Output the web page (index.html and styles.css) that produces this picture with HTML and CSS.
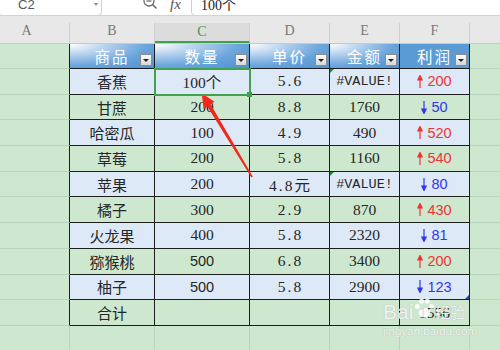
FILE: index.html
```html
<!DOCTYPE html>
<html>

<head>
	<title>水果销售表</title>
	<link rel="stylesheet" href="styles.css">
</head>

<body>
	<div class="toolbar">
		<div class="toolbar-inner">
			<div class="namebox"><span>C2</span><span class="caret"></span></div>
			<svg class="zoom-icon" viewBox="0 0 16 16">
				<circle cx="7" cy="5" r="5" fill="none" stroke="#6b6b6b" stroke-width="1.3" />
				<line x1="4.5" y1="5" x2="9.5" y2="5" stroke="#6b6b6b" stroke-width="1.3" />
				<line x1="10.6" y1="8.6" x2="14.5" y2="12.5" stroke="#6b6b6b" stroke-width="1.5" />
			</svg>
			<span class="fx">fx</span>
			<div class="formula">100个</div>
		</div>
	</div>

	<div class="colheads">
		<div class="ch a">A</div>
		<div class="ch">B</div>
		<div class="ch sel">C</div>
		<div class="ch">D</div>
		<div class="ch">E</div>
		<div class="ch">F</div>
		<div class="ch g"></div>
	</div>

	<div class="sheet">
		<div class="row head">
			<div class="cell edge"></div>
			<div class="cell t th">商品<span class="filter"></span></div>
			<div class="cell t th">数量<span class="filter"></span></div>
			<div class="cell t th">单价<span class="filter"></span></div>
			<div class="cell t th">金额<span class="filter"></span></div>
			<div class="cell t th flat">利润<span class="filter"></span></div>
			<div class="cell g"></div>
		</div>
		<div class="row blue">
			<div class="cell edge"></div>
			<div class="cell t">香蕉</div>
			<div class="cell t num picked">100个</div>
			<div class="cell t num d">5.6</div>
			<div class="cell t mono err">#VALUE!</div>
			<div class="cell t up"><svg class="arr" viewBox="0 0 6 13"><path d="M3 13V2" /><polygon points="0.8,5 3,0.5 5.2,5" /></svg>200</div>
			<div class="cell g"></div>
		</div>
		<div class="row">
			<div class="cell edge"></div>
			<div class="cell t">甘蔗</div>
			<div class="cell t num">200</div>
			<div class="cell t num d">8.8</div>
			<div class="cell t num">1760</div>
			<div class="cell t down"><svg class="arr" viewBox="0 0 6 13"><path d="M3 0V11" /><polygon points="0.8,8 3,12.5 5.2,8" /></svg>50</div>
			<div class="cell g"></div>
		</div>
		<div class="row blue">
			<div class="cell edge"></div>
			<div class="cell t">哈密瓜</div>
			<div class="cell t num">100</div>
			<div class="cell t num d">4.9</div>
			<div class="cell t num">490</div>
			<div class="cell t up"><svg class="arr" viewBox="0 0 6 13"><path d="M3 13V2" /><polygon points="0.8,5 3,0.5 5.2,5" /></svg>520</div>
			<div class="cell g"></div>
		</div>
		<div class="row">
			<div class="cell edge"></div>
			<div class="cell t">草莓</div>
			<div class="cell t num">200</div>
			<div class="cell t num d">5.8</div>
			<div class="cell t num">1160</div>
			<div class="cell t up"><svg class="arr" viewBox="0 0 6 13"><path d="M3 13V2" /><polygon points="0.8,5 3,0.5 5.2,5" /></svg>540</div>
			<div class="cell g"></div>
		</div>
		<div class="row blue">
			<div class="cell edge"></div>
			<div class="cell t">苹果</div>
			<div class="cell t num">200</div>
			<div class="cell t num d">4.8元</div>
			<div class="cell t mono err">#VALUE!</div>
			<div class="cell t down"><svg class="arr" viewBox="0 0 6 13"><path d="M3 0V11" /><polygon points="0.8,8 3,12.5 5.2,8" /></svg>80</div>
			<div class="cell g"></div>
		</div>
		<div class="row">
			<div class="cell edge"></div>
			<div class="cell t">橘子</div>
			<div class="cell t num">300</div>
			<div class="cell t num d">2.9</div>
			<div class="cell t num">870</div>
			<div class="cell t up"><svg class="arr" viewBox="0 0 6 13"><path d="M3 13V2" /><polygon points="0.8,5 3,0.5 5.2,5" /></svg>430</div>
			<div class="cell g"></div>
		</div>
		<div class="row blue">
			<div class="cell edge"></div>
			<div class="cell t">火龙果</div>
			<div class="cell t num">400</div>
			<div class="cell t num d">5.8</div>
			<div class="cell t num">2320</div>
			<div class="cell t down"><svg class="arr" viewBox="0 0 6 13"><path d="M3 0V11" /><polygon points="0.8,8 3,12.5 5.2,8" /></svg>81</div>
			<div class="cell g"></div>
		</div>
		<div class="row">
			<div class="cell edge"></div>
			<div class="cell t">猕猴桃</div>
			<div class="cell t sans">500</div>
			<div class="cell t num d">6.8</div>
			<div class="cell t num">3400</div>
			<div class="cell t up"><svg class="arr" viewBox="0 0 6 13"><path d="M3 13V2" /><polygon points="0.8,5 3,0.5 5.2,5" /></svg>200</div>
			<div class="cell g"></div>
		</div>
		<div class="row blue">
			<div class="cell edge"></div>
			<div class="cell t">柚子</div>
			<div class="cell t sans">500</div>
			<div class="cell t num d">5.8</div>
			<div class="cell t num">2900</div>
			<div class="cell t down corner"><svg class="arr" viewBox="0 0 6 13"><path d="M3 0V11" /><polygon points="0.8,8 3,12.5 5.2,8" /></svg>123</div>
			<div class="cell g"></div>
		</div>
		<div class="row">
			<div class="cell edge"></div>
			<div class="cell t">合计</div>
			<div class="cell t"></div>
			<div class="cell t"></div>
			<div class="cell t"></div>
			<div class="cell t num">1556</div>
			<div class="cell g"></div>
		</div>
		<div class="row last">
			<div class="cell"></div>
			<div class="cell"></div>
			<div class="cell"></div>
			<div class="cell"></div>
			<div class="cell"></div>
			<div class="cell"></div>
			<div class="cell g"></div>
		</div>
	</div>

	<!-- red pointer drawn over the sheet -->
	<svg class="pointer" viewBox="0 0 500 350">
		<polygon points="201.7,93.3 214.5,101.8 210.6,104.3 252.8,176.4 251.4,177.6 207.2,106.3 203.6,108.8" fill="#f2281c" />
	</svg>

	<div class="watermark">
		<div class="wm-top">
			<span class="wm-bai">Bai</span>
			<svg class="paw" viewBox="0 0 22 22">
				<ellipse cx="11" cy="16" rx="6" ry="5" />
				<circle cx="3.5" cy="9.5" r="2.6" />
				<circle cx="8" cy="4" r="2.6" />
				<circle cx="14" cy="4" r="2.6" />
				<circle cx="18.5" cy="9.5" r="2.6" />
			</svg>
			<span class="wm-jy">经验</span>
		</div>
		<div class="wm-url">jingyan.baidu.com</div>
	</div>
</body>

</html>
```

FILE: styles.css
```css
:root {
	--cols: 70px 85px 95px 80px 70px 70px 30px;
	--green: #cde8cf;
	--blue: #dde9f6;
	--grid: #b9d4bc;
	--line: #1e1e1e;
	--head: #5b9bd5;
	--pick: #3fa34d;
}

body {
	margin: 0;
	width: 500px;
	height: 350px;
	overflow: hidden;
	position: relative;
	background-color: var(--green);
	font-family: "Noto Sans CJK SC", sans-serif;
	color: #262626;
}

/* formula bar */
.toolbar {
	height: 15px;
	background-color: #fff;
	border-bottom: 1px solid #d3d3d3;
	overflow: hidden;
}

.toolbar-inner {
	display: flex;
	align-items: center;
	height: 24px;
	margin-top: -8px;
}

.namebox {
	box-sizing: border-box;
	width: 104px;
	height: 24px;
	margin-left: -2px;
	padding-left: 19px;
	display: flex;
	align-items: center;
	border: 1px solid #d0d0d0;
	border-radius: 4px;
	font: 13px "Liberation Sans", sans-serif;
	color: #555;
}

.caret {
	margin-left: auto;
	margin-right: 3px;
	width: 0;
	height: 0;
	border-left: 2.5px solid transparent;
	border-right: 2.5px solid transparent;
	border-top: 3px solid #888;
}

.zoom-icon {
	margin-left: 40px;
	width: 16px;
	height: 16px;
}

.fx {
	margin-left: 12px;
	width: 14px;
	font: italic 15px "Liberation Serif", serif;
	color: #555;
}

.formula {
	box-sizing: border-box;
	flex: 1;
	height: 24px;
	margin-left: 7px;
	margin-right: -6px;
	padding-left: 9px;
	display: flex;
	align-items: center;
	border: 1px solid #d0d0d0;
	border-radius: 4px;
	font: 14px "Liberation Serif", "Noto Sans CJK SC", serif;
	color: #222;
}

/* column letters */
.colheads {
	display: grid;
	grid-template-columns: var(--cols);
	align-items: end;
	height: 27px;
	background-color: #e8e8e8;
	border-bottom: 1px solid #c9c9c9;
}

.ch {
	box-sizing: border-box;
	height: 20px;
	line-height: 20px;
	text-align: center;
	border-right: 1px solid #cfcfcf;
	font: 14px "Liberation Serif", serif;
	color: #7a7a7a;
}

.ch.a {
	padding-right: 16px;
}

.ch.sel {
	line-height: 18px;
	background-color: #dcdcdc;
	color: #3f9b48;
	border-bottom: 2px solid var(--pick);
}

.ch.g {
	border-right: none;
}

/* sheet */
.row {
	display: grid;
	grid-template-columns: var(--cols);
	height: 25.7px;
}

.row.head {
	height: 25px;
}

.row.last {
	height: 26px;
}

.cell {
	box-sizing: border-box;
	position: relative;
	display: flex;
	align-items: center;
	justify-content: center;
	white-space: nowrap;
	border-right: 1px solid var(--grid);
	border-bottom: 1px solid var(--grid);
	font-size: 15px;
}

.cell.g {
	border-right: none;
}

.cell.edge {
	border-right-color: var(--line);
}

.cell.t {
	border-right-color: var(--line);
	border-bottom-color: var(--line);
}

.row.blue .t {
	background-color: var(--blue);
}

.th {
	color: #fff;
	font-size: 15.5px;
	letter-spacing: 2px;
	background: radial-gradient(ellipse at 0 0, #ffffff 0%, #b4d0ee 32%, #6aa5dc 64%, #4f90cf 100%);
}

.th.flat {
	background: var(--head);
}

.filter {
	position: absolute;
	right: 2px;
	bottom: 2px;
	box-sizing: border-box;
	width: 12px;
	height: 12px;
	border: 1px solid #8c8c8c;
	background: linear-gradient(#fdfdfd, #d6d6d6);
}

.filter::after {
	content: "";
	position: absolute;
	left: 2px;
	top: 4px;
	border-left: 3px solid transparent;
	border-right: 3px solid transparent;
	border-top: 3px solid #222;
}

.num {
	font-family: "Liberation Serif", "Noto Sans CJK SC", serif;
	font-size: 15.5px;
}

.num.d {
	letter-spacing: 2px;
	padding-left: 2px;
}

.mono {
	font-family: "Liberation Mono", monospace;
	font-size: 13.5px;
}

.sans {
	font-family: "Liberation Sans", sans-serif;
	font-size: 14.5px;
}

.up,
.down {
	font-family: "Liberation Sans", sans-serif;
	font-size: 14.5px;
}

.up {
	color: #ee3535;
}

.down {
	color: #3434ee;
}

.arr {
	width: 6px;
	height: 13px;
	margin-right: 4px;
	stroke: currentColor;
	stroke-width: 1.2;
	fill: currentColor;
}

.picked {
	outline: 2px solid var(--pick);
	outline-offset: -1px;
	z-index: 1;
}

.picked::after {
	content: "";
	position: absolute;
	right: -3px;
	bottom: -3px;
	width: 5px;
	height: 5px;
	background-color: var(--pick);
}

.err::before {
	content: "";
	position: absolute;
	top: 0;
	left: 0;
	border-top: 4px solid #1f8a2e;
	border-right: 4px solid transparent;
}

.corner::after {
	content: "";
	position: absolute;
	right: 0;
	bottom: 0;
	border-bottom: 4px solid #2b4d9e;
	border-left: 4px solid transparent;
}

.pointer {
	position: absolute;
	top: 0;
	left: 0;
	width: 500px;
	height: 350px;
	pointer-events: none;
}

/* watermark */
.watermark {
	position: absolute;
	left: 383px;
	top: 296px;
	display: flex;
	flex-direction: column;
	color: rgba(255, 255, 255, 0.85);
	text-shadow: 0 0 1px rgba(120, 120, 120, 0.5);
}

.wm-top {
	display: flex;
	align-items: flex-end;
	height: 28px;
}

.wm-bai {
	font: 21px "Liberation Sans", sans-serif;
	line-height: 24px;
}

.paw {
	width: 21px;
	height: 22px;
	margin: 0 0 5px 1px;
	fill: rgba(255, 255, 255, 0.85);
}

.wm-jy {
	font-size: 15px;
	line-height: 22px;
	margin-bottom: 1px;
}

.wm-url {
	font: 11.7px "Liberation Sans", sans-serif;
	line-height: 14px;
}
```
